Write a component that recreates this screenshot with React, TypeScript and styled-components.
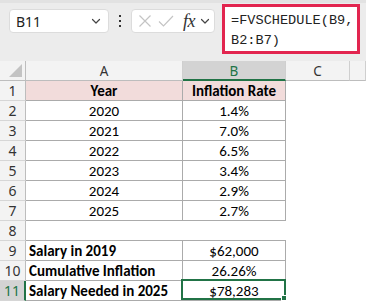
import React from "react";
import styled, { createGlobalStyle, css } from "styled-components";

const Global = createGlobalStyle`
  html, body { margin: 0; padding: 0; background: #ffffff; }
  body { font-family: "Segoe UI", "Noto Sans", sans-serif; }
  * { box-sizing: border-box; }
`;

const GREEN = "#217346";

const Page = styled.div`
  width: 366px;
  height: 304px;
  overflow: hidden;
  background: #ffffff;
`;

const TopBar = styled.div`
  height: 61px;
  background: #ececec;
  border-top: 3px solid #e2e2e2;
  display: flex;
  align-items: flex-start;
  padding: 1px 0 0 9px;
`;

const NameBox = styled.div`
  margin-top: 5px;
  width: 100px;
  height: 24px;
  background: #fff;
  border: 1px solid #dcdcdc;
  border-radius: 4px;
  display: flex;
  align-items: center;
  justify-content: space-between;
  padding: 0 6px 0 6px;
  font-family: "Noto Sans", "Segoe UI", sans-serif;
  font-size: 14px;
  color: #222;
`;

const Dots = styled.div`
  width: 22px;
  height: 24px;
  margin-top: 5px;
  display: flex;
  align-items: center;
  justify-content: center;
`;

const ButtonsBox = styled.div`
  margin-top: 5px;
  width: 84px;
  height: 24px;
  background: #fff;
  border: 1px solid #dcdcdc;
  border-radius: 4px;
  display: flex;
  align-items: center;
  padding-left: 6px;
  gap: 6px;
`;

const Fx = styled.span`
  font-family: "Liberation Serif", "DejaVu Serif", serif;
  font-style: italic;
  font-size: 18px;
  line-height: 18px;
  color: #333;
  margin-left: 3px;
  margin-right: -2px;
  letter-spacing: -0.5px;
`;

const FormulaBox = styled.div`
  margin-left: 7px;
  width: 138px;
  height: 50px;
  border: 3px solid #e2254f;
  background: #fff;
  padding: 4px 0 0 6px;
  font-family: "Liberation Mono", "DejaVu Sans Mono", monospace;
  font-size: 13.6px;
  line-height: 20px;
  color: #222;
  white-space: pre;
`;

const Grid = styled.div`
  display: grid;
  grid-template-columns: 26px 157px 103px 64px 1fr;
  grid-auto-rows: 20px;
`;

const ColHead = styled.div<{ $sel?: boolean }>`
  background: ${(p) => (p.$sel ? "#d3d3d3" : "#f3f3f3")};
  border-right: 1px solid #cfcfcf;
  border-bottom: ${(p) => (p.$sel ? `2px solid ${GREEN}` : "1px solid #bdbdbd")};
  display: flex;
  align-items: center;
  justify-content: center;
  font-family: "Noto Sans", "Segoe UI", sans-serif;
  font-size: 13.5px;
  color: ${(p) => (p.$sel ? GREEN : "#333")};
  padding-top: ${(p) => (p.$sel ? "1px" : "0")};
`;

const Corner = styled.div`
  background: #f3f3f3;
  border-right: 1px solid #bdbdbd;
  border-bottom: 1px solid #bdbdbd;
  position: relative;
`;

const CornerTri = styled.div`
  position: absolute;
  right: 3px;
  bottom: 3px;
  width: 0;
  height: 0;
  border-left: 13px solid transparent;
  border-bottom: 13px solid #c3c3c3;
`;

const RowHead = styled.div<{ $sel?: boolean }>`
  background: ${(p) => (p.$sel ? "#d3d3d3" : "#f3f3f3")};
  border-right: ${(p) => (p.$sel ? `2px solid ${GREEN}` : "1px solid #bdbdbd")};
  border-bottom: 1px solid #d6d6d6;
  display: flex;
  align-items: center;
  justify-content: center;
  font-family: "Noto Sans", "Segoe UI", sans-serif;
  font-size: 14px;
  color: ${(p) => (p.$sel ? GREEN : "#333")};
`;

const Cell = styled.div<{
  $bold?: boolean;
  $pink?: boolean;
  $left?: boolean;
  $bordered?: boolean;
  $bottomOnly?: boolean;
}>`
  position: relative;
  display: flex;
  align-items: center;
  justify-content: ${(p) => (p.$left ? "flex-start" : "center")};
  padding-left: ${(p) => (p.$left ? "3px" : "0")};
  padding-top: 1px;
  font-family: Carlito, Calibri, Lato, "Liberation Sans", sans-serif;
  font-size: 15px;
  font-weight: ${(p) => (p.$bold ? 700 : 400)};
  color: #000;
  white-space: nowrap;
  background: ${(p) => (p.$pink ? "#f2dcdb" : "#fff")};
  ${(p) =>
    p.$bordered &&
    css`
      border-right: 1px solid #ababab;
      border-bottom: 1px solid #ababab;
    `}
  ${(p) =>
    p.$bottomOnly &&
    css`
      border-bottom: 1px solid #ababab;
    `}
`;

const Selection = styled.div`
  position: absolute;
  left: -2px;
  top: -2px;
  right: -1px;
  bottom: 0;
  border: 2px solid ${GREEN};
  pointer-events: none;
`;

const Handle = styled.div`
  position: absolute;
  right: -3px;
  bottom: -3px;
  width: 6px;
  height: 6px;
  background: ${GREEN};
  border: 1px solid #fff;
`;

const Blank = styled.div``;

const Chevron = () => (
  <svg width="12" height="12" viewBox="0 0 12 12" fill="none">
    <path d="M2.5 4.5 L6 8 L9.5 4.5" stroke="#444" strokeWidth="1.2" strokeLinecap="round" strokeLinejoin="round" />
  </svg>
);

const VDots = () => (
  <svg width="4" height="14" viewBox="0 0 4 14">
    <rect x="1" y="1" width="2" height="2" fill="#333" />
    <rect x="1" y="6" width="2" height="2" fill="#333" />
    <rect x="1" y="11" width="2" height="2" fill="#333" />
  </svg>
);

const XIcon = () => (
  <svg width="14" height="14" viewBox="0 0 14 14" fill="none">
    <path d="M1.5 1.5 L12.5 12.5 M12.5 1.5 L1.5 12.5" stroke="#c4c4c4" strokeWidth="1.2" />
  </svg>
);

const CheckIcon = () => (
  <svg width="16" height="14" viewBox="0 0 16 14" fill="none">
    <path d="M1 7.5 L5.5 12 L15 2" stroke="#c4c4c4" strokeWidth="1.2" />
  </svg>
);

const rows: { n: number; a: string; b: string; kind: "head" | "data" | "empty" | "label" }[] = [
  { n: 1, a: "Year", b: "Inflation Rate", kind: "head" },
  { n: 2, a: "2020", b: "1.4%", kind: "data" },
  { n: 3, a: "2021", b: "7.0%", kind: "data" },
  { n: 4, a: "2022", b: "6.5%", kind: "data" },
  { n: 5, a: "2023", b: "3.4%", kind: "data" },
  { n: 6, a: "2024", b: "2.9%", kind: "data" },
  { n: 7, a: "2025", b: "2.7%", kind: "data" },
  { n: 8, a: "", b: "", kind: "empty" },
  { n: 9, a: "Salary in 2019", b: "$62,000", kind: "label" },
  { n: 10, a: "Cumulative Inflation", b: "26.26%", kind: "label" },
  { n: 11, a: "Salary Needed in 2025", b: "$78,283", kind: "label" },
];

export default function App() {
  return (
    <Page>
      <Global />
      <TopBar>
        <NameBox>
          <span>B11</span>
          <Chevron />
        </NameBox>
        <Dots>
          <VDots />
        </Dots>
        <ButtonsBox>
          <XIcon />
          <CheckIcon />
          <Fx>fx</Fx>
          <Chevron />
        </ButtonsBox>
        <FormulaBox>{"=FVSCHEDULE(B9,\nB2:B7)"}</FormulaBox>
      </TopBar>
      <Grid>
        <Corner>
          <CornerTri />
        </Corner>
        <ColHead>A</ColHead>
        <ColHead $sel>B</ColHead>
        <ColHead>C</ColHead>
        <ColHead />
        {rows.map((r) => {
          const sel = r.n === 11;
          return (
            <React.Fragment key={r.n}>
              <RowHead $sel={sel}>{r.n}</RowHead>
              {r.kind === "empty" ? (
                <>
                  <Cell $bottomOnly />
                  <Cell $bottomOnly />
                </>
              ) : (
                <>
                  <Cell
                    $bordered
                    $pink={r.kind === "head"}
                    $bold={r.kind === "head" || r.kind === "label"}
                    $left={r.kind === "label"}
                  >
                    {r.a}
                  </Cell>
                  <Cell $bordered $pink={r.kind === "head"} $bold={r.kind === "head"}>
                    {r.b}
                    {sel && (
                      <Selection>
                        <Handle />
                      </Selection>
                    )}
                  </Cell>
                </>
              )}
              <Blank />
              <Blank />
            </React.Fragment>
          );
        })}
      </Grid>
    </Page>
  );
}
